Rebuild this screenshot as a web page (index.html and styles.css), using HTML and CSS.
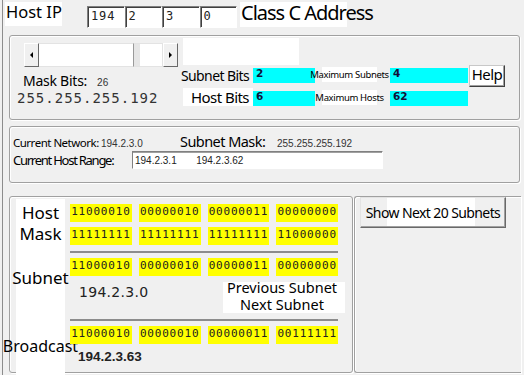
FILE: index.html
```html
<!DOCTYPE html>
<html lang="en">
<head>
	<meta charset="UTF-8">
	<title>Subnet Calculator</title>
	<link rel="stylesheet" href="styles.css">
</head>
<body>
	<div class="applet">
		<!-- 地址输入 -->
		<div class="top">
			<div class="host-lbl">Host IP</div>
			<div class="octets">
				<div class="octet">194</div>
				<div class="octet">2</div>
				<div class="octet">3</div>
				<div class="octet">0</div>
			</div>
			<div class="class-lbl">Class C Address</div>
		</div>

		<!-- 掩码位数 -->
		<div class="panel mask-panel">
			<div class="mask-col">
				<div class="scrollbar">
					<span class="sb-btn sb-left"></span>
					<span class="sb-track"></span>
					<span class="sb-thumb"></span>
					<span class="sb-btn sb-right"></span>
				</div>
				<div class="mask-bits">Mask Bits:<span class="mask-num">26</span></div>
				<div class="mask-dotted">255.255.255.192</div>
			</div>
			<div class="bits-col">
				<div class="blank"></div>
				<div class="bits-row">
					<div class="bits-lbl">Subnet Bits</div>
					<div class="val short">2</div>
					<div class="max-lbl">Maximum Subnets</div>
					<div class="val long">4</div>
					<div class="btn help">Help</div>
				</div>
				<div class="bits-row second">
					<div class="bits-lbl host">Host Bits</div>
					<div class="val short">6</div>
					<div class="max-lbl">Maximum Hosts</div>
					<div class="val long">62</div>
				</div>
			</div>
		</div>

		<!-- 当前网络 -->
		<div class="panel net-panel">
			<div class="net-row">
				<div class="net-lbl">Current Network:</div>
				<div class="net-val">194.2.3.0</div>
				<div class="sm-lbl">Subnet Mask:</div>
				<div class="net-val">255.255.255.192</div>
			</div>
			<div class="range-row">
				<div class="range-lbl">Current Host Range:</div>
				<div class="range-field">194.2.3.1       194.2.3.62</div>
			</div>
		</div>

		<!-- 二进制 -->
		<div class="lower">
			<div class="panel bin-panel">
				<div class="names">
					<div class="name">Host</div>
					<div class="name">Mask</div>
					<div class="name subnet">Subnet</div>
					<div class="name bcast">Broadcast</div>
				</div>
				<div class="bits">
					<div class="byte-row">
						<div class="byte">11000010</div>
						<div class="byte">00000010</div>
						<div class="byte">00000011</div>
						<div class="byte">00000000</div>
					</div>
					<div class="byte-row">
						<div class="byte">11111111</div>
						<div class="byte">11111111</div>
						<div class="byte">11111111</div>
						<div class="byte">11000000</div>
					</div>
					<div class="rule"></div>
					<div class="byte-row">
						<div class="byte">11000010</div>
						<div class="byte">00000010</div>
						<div class="byte">00000011</div>
						<div class="byte">00000000</div>
					</div>
					<div class="subnet-info">
						<div class="ip">194.2.3.0</div>
						<div class="nav">
							<div class="nav-text">Previous Subnet</div>
							<div class="nav-text">Next Subnet</div>
						</div>
					</div>
					<div class="rule"></div>
					<div class="byte-row">
						<div class="byte">11000010</div>
						<div class="byte">00000010</div>
						<div class="byte">00000011</div>
						<div class="byte">00111111</div>
					</div>
					<div class="bcast-ip">194.2.3.63</div>
				</div>
			</div>
			<div class="panel next-panel">
				<div class="btn show-btn">Show Next 20 Subnets</div>
			</div>
		</div>
	</div>
</body>
</html>
```
FILE: styles.css
```css
body {
	margin: 0;
	background: #f0f0f0;
	font-family: "Noto Sans", sans-serif;
	color: #000;
	overflow: hidden;
}
.applet {
	margin-left: 2px;
	border-left: 1px solid #8c8c8c;
	height: 375px;
}

/* 1 - 顶部 */
.top {
	display: flex;
	align-items: flex-start;
	height: 35px;
}
.host-lbl {
	margin: 2px 0 0 2px;
	width: 57px;
	height: 24px;
	box-sizing: border-box;
	padding-left: 1px;
	background: #fff;
	font-size: 16.5px;
	line-height: 20px;
	white-space: nowrap;
}
.octets {
	display: flex;
	margin: 6px 0 0 25px;
}
.octet {
	width: 37.5px;
	height: 22px;
	box-sizing: border-box;
	padding: 2px 0 0 3px;
	background: #fff;
	border: 1px solid;
	border-color: #808080 #fff #fff #808080;
	box-shadow: inset 1px 1px #404040;
	font: 12px/14px "DejaVu Sans Mono", monospace;
	letter-spacing: 0.9px;
	color: #222;
}
.class-lbl {
	margin: 2px 0 0 3px;
	width: 107px;
	height: 25px;
	box-sizing: border-box;
	padding-left: 1px;
	background: #fff;
	font-size: 20px;
	line-height: 22px;
	letter-spacing: -1px;
	white-space: nowrap;
}

/* 边框面板 */
.panel {
	box-sizing: border-box;
	border: 1px solid #a0a0a0;
	border-radius: 3px;
	box-shadow: inset 1px 1px #fff, 1px 1px #fff;
}

/* 2 - 掩码面板 */
.mask-panel {
	display: flex;
	margin-left: 6px;
	width: 511px;
	height: 85px;
}
.mask-col {
	flex: none;
	width: 154px;
	margin-left: 14px;
	padding-top: 7px;
}
.scrollbar {
	display: flex;
	height: 24px;
}
.sb-btn {
	flex: none;
	width: 15px;
	box-sizing: border-box;
	background: #f0f0f0;
	border: 1px solid;
	border-color: #fff #696969 #696969 #fff;
	display: flex;
	align-items: center;
	justify-content: center;
}
.sb-left:before {
	content: '';
	border: 3px solid transparent;
	border-left: 0;
	border-right-color: #000;
}
.sb-right:before {
	content: '';
	border: 3px solid transparent;
	border-right: 0;
	border-left-color: #000;
}
.sb-track {
	flex: 1;
	background: #fff;
	border-top: 1px solid #e3e3e3;
	border-bottom: 1px solid #e3e3e3;
}
.sb-thumb {
	flex: none;
	width: 30px;
	box-sizing: border-box;
	background: #fff;
	border: 1px solid #e3e3e3;
	border-left: 1px solid #9a9a9a;
	box-shadow: inset 6px 0 #e6e6e6;
}
.mask-bits {
	margin: 5.5px 0 0 -1px;
	font-size: 14px;
	line-height: 16px;
	letter-spacing: -0.25px;
	white-space: nowrap;
}
.mask-num {
	margin-left: 10px;
	font: 10px "Liberation Sans", sans-serif;
	letter-spacing: 0;
	color: #333;
}
.mask-dotted {
	margin: 1.5px 0 0 -7px;
	font: 14px/16px "DejaVu Sans Mono", monospace;
	letter-spacing: 1px;
	color: #333;
	white-space: nowrap;
}
.bits-col {
	flex: none;
	margin-left: 2px;
	padding-top: 2px;
}
.blank {
	margin-left: 3px;
	width: 116px;
	height: 27px;
	background: #fff;
}
.bits-row {
	display: flex;
	align-items: flex-start;
	height: 20px;
	margin-top: 2px;
}
.bits-row.second {
	margin-top: 1px;
}
.bits-lbl {
	width: 73px;
	height: 17px;
	box-sizing: border-box;
	padding-right: 4px;
	text-align: right;
	font-size: 14px;
	line-height: 17px;
	letter-spacing: -0.6px;
	white-space: nowrap;
}
.bits-lbl.host {
	margin-left: 3px;
	width: 70px;
	height: 18px;
	background: #fff;
	font-size: 15px;
	line-height: 18px;
	letter-spacing: -0.55px;
}
.val {
	height: 15px;
	margin-top: 1px;
	box-sizing: border-box;
	padding: 0 3px;
	background: #0ff;
	font: bold 10.5px/10px "DejaVu Sans", sans-serif;
	color: #101038;
}
.val.short {
	width: 62px;
}
.val.long {
	width: 78px;
	margin-left: 13px;
}
.second .val {
	margin-top: 3px;
}
.max-lbl {
	width: 55px;
	height: 15px;
	margin-left: 7px;
	background: #fff;
	display: flex;
	justify-content: center;
	white-space: nowrap;
	font-size: 9.5px;
	line-height: 15px;
	letter-spacing: -0.35px;
}
.second .max-lbl {
	margin-top: 2px;
}
.btn {
	box-sizing: border-box;
	border: 1px solid;
	border-color: #c8c8c8 #404040 #404040 #c8c8c8;
	box-shadow: inset -1px -1px #a0a0a0;
	text-align: center;
	white-space: nowrap;
}
.help {
	margin: -2px 0 0 1px;
	width: 36px;
	height: 22px;
	background: #fff;
	font-size: 15px;
	line-height: 16px;
	letter-spacing: -0.6px;
}

/* 3 - 当前网络面板 */
.net-panel {
	margin: 6px 0 0 6px;
	width: 511px;
	height: 57px;
	padding: 4px 0 0 3px;
}
.net-row {
	display: flex;
	align-items: baseline;
	height: 20px;
	line-height: 20px;
	white-space: nowrap;
}
.net-lbl {
	width: 88px;
	font-size: 11.5px;
	letter-spacing: -0.5px;
}
.net-val {
	width: 79px;
	font: 10px/20px "Liberation Sans", sans-serif;
	color: #333;
}
.sm-lbl {
	width: 97px;
	font-size: 14.5px;
	letter-spacing: -0.55px;
}
.range-row {
	display: flex;
	align-items: flex-start;
}
.range-lbl {
	width: 119px;
	font-size: 13px;
	line-height: 18px;
	letter-spacing: -1.25px;
	white-space: nowrap;
}
.range-field {
	width: 251px;
	height: 18px;
	box-sizing: border-box;
	padding: 2px 0 0 2px;
	background: #fff;
	border: 1px solid;
	border-color: #808080 #fff #fff #808080;
	box-shadow: inset 0 1px #a0a0a0;
	font: 10px/14px "Liberation Sans", sans-serif;
	color: #222;
	white-space: pre;
}

/* 4 - 二进制面板 */
.lower {
	display: flex;
	margin: 13px 0 0 6px;
	height: 177px;
}
.bin-panel {
	flex: none;
	display: flex;
	width: 344px;
}
.next-panel {
	flex: none;
	width: 167px;
	margin-left: 1px;
	border-right: 0;
	border-radius: 3px 0 0 3px;
}
.names {
	flex: none;
	width: 49px;
	height: 176px;
	margin: 2px 0 0 6px;
	box-sizing: border-box;
	padding-top: 3px;
	background: #fff;
}
.name {
	display: flex;
	justify-content: center;
	white-space: nowrap;
	font-size: 17px;
	line-height: 21px;
}
.name.subnet {
	margin-top: 23px;
}
.name.bcast {
	margin-top: 48px;
	font-size: 16px;
	line-height: 20px;
}
.bits {
	flex: none;
	width: 268px;
	margin: 7px 0 0 5px;
}
.byte-row {
	display: flex;
	gap: 7px;
	margin-top: 5px;
}
.byte-row:first-child {
	margin-top: 0;
}
.byte {
	width: 62px;
	height: 18px;
	background: #ff0;
	text-align: center;
	font: 11px/16px "DejaVu Sans Mono", monospace;
	letter-spacing: 0.8px;
	color: #222;
}
.rule {
	height: 2px;
	margin-top: 6px;
	background: #8c8c8c;
}
.subnet-info {
	display: flex;
	align-items: flex-start;
	height: 37px;
}
.ip {
	margin: 8px 0 0 9px;
	font: 14px/16px "DejaVu Sans", sans-serif;
	letter-spacing: 0.3px;
	color: #222;
}
.nav {
	margin: 6px -7px 0 auto;
	width: 122px;
	height: 31px;
	box-sizing: border-box;
	padding: 0 4px 0 0;
	background: #fff;
	text-align: center;
	font-size: 14.5px;
	line-height: 16.5px;
	white-space: nowrap;
}
.nav-text:first-child {
	margin-top: -3px;
}
.bcast-ip {
	margin: 5px 0 0 8px;
	font: bold 13.5px/15px "Liberation Sans", sans-serif;
	color: #222;
}
.show-btn {
	margin-left: 5px;
	width: 146px;
	height: 31px;
	background: linear-gradient(to right, #f0f0f0 26px, #fff 26px, #fff 114px, #f0f0f0 114px);
	border-color: #e3e3e3 #696969 #696969 #e3e3e3;
	font-size: 14px;
	line-height: 29px;
	letter-spacing: -0.6px;
}
```
